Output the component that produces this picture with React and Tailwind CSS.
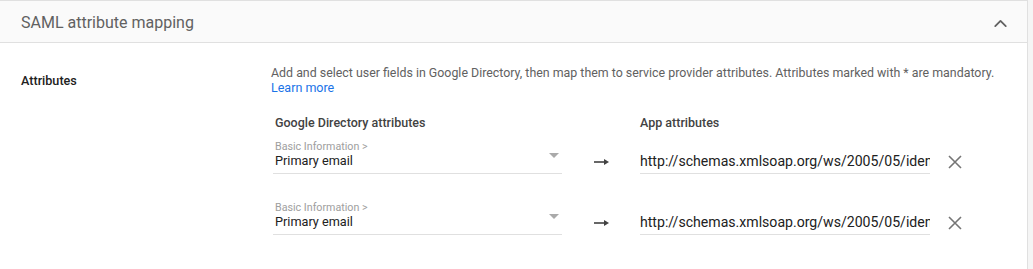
import { ChevronUp } from 'lucide-react'

const rows = [
  { group: 'Basic Information >', field: 'Primary email', url: 'http://schemas.xmlsoap.org/ws/2005/05/identity/claims/emailaddress' },
  { group: 'Basic Information >', field: 'Primary email', url: 'http://schemas.xmlsoap.org/ws/2005/05/identity/claims/name' },
]

function MappingRow({ row }) {
  return (
    <div className="flex items-end h-[43px]">
      {/* Directory field select */}
      <div className="w-[289px] border-b border-[#e0e0e0] pb-[5px] pl-[2px] relative">
        <div className="text-[10.7px] leading-[13px] text-[#9e9e9e]">{row.group}</div>
        <div className="text-[12.7px] leading-[15px] text-[#212121]">{row.field}</div>
        <div className="absolute right-[3px] top-[13px] w-0 h-0 border-l-[5px] border-r-[5px] border-t-[5px] border-l-transparent border-r-transparent border-t-[#aaaaaa]" />
      </div>

      {/* Arrow */}
      <div className="w-[78px] flex justify-center pb-[8px]">
        <svg width="15" height="8" viewBox="0 0 15 8">
          <path d="M0 4h12" stroke="#424242" strokeWidth="1.6" />
          <path d="M10 1l5 3-5 3z" fill="#424242" />
        </svg>
      </div>

      {/* App attribute input */}
      <div className="w-[290px] border-b border-[#e0e0e0] pb-[3px] overflow-hidden whitespace-nowrap text-[14.1px] leading-[18px] text-[#212121]">
        {row.url}
      </div>

      <button className="ml-[18px] mb-[5px]">
        <svg width="14" height="14" viewBox="0 0 14 14">
          <path d="M1 1l12 12M13 1L1 13" stroke="#757575" strokeWidth="1.6" />
        </svg>
      </button>
    </div>
  )
}

export default function App() {
  return (
    <div className="w-[1033px] h-[269px] bg-[#f5f5f5] overflow-hidden font-['Roboto',sans-serif]">
      <div className="w-[1028px] h-full bg-white border-r border-[#e0e0e0]">
        {/* Header */}
        <div className="h-[43px] bg-[#fafafa] border-t border-b border-[#e0e0e0] flex items-center justify-between pl-[21px] pr-[16px] pt-[3px]">
          <div className="text-[16px] text-[#616161]">SAML attribute mapping</div>
          <ChevronUp size={21} strokeWidth={2.1} className="text-[#616161]" />
        </div>

        {/* Body */}
        <div className="flex pt-[22px]">
          <div className="w-[271px] pl-[21px] pt-[7px] text-[12.6px] font-medium text-[#212121]">Attributes</div>
          <div className="flex-1">
            <div className="text-[12.4px] leading-[15px] text-[#616161]">
              Add and select user fields in Google Directory, then map them to service provider attributes. Attributes marked with * are mandatory.
            </div>
            <a className="block text-[12.5px] leading-[15px] text-[#1a73e8]">Learn more</a>

            <div className="pl-[2px] mt-[20px]">
              <div className="flex text-[12.5px] leading-[16px] font-medium text-[#424242]">
                <div className="w-[367px] pl-[2px]">Google Directory attributes</div>
                <div>App attributes</div>
              </div>
              <div className="flex flex-col gap-[18px]">
                {rows.map((row, i) => (
                  <MappingRow key={i} row={row} />
                ))}
              </div>
            </div>
          </div>
        </div>
      </div>
    </div>
  )
}
